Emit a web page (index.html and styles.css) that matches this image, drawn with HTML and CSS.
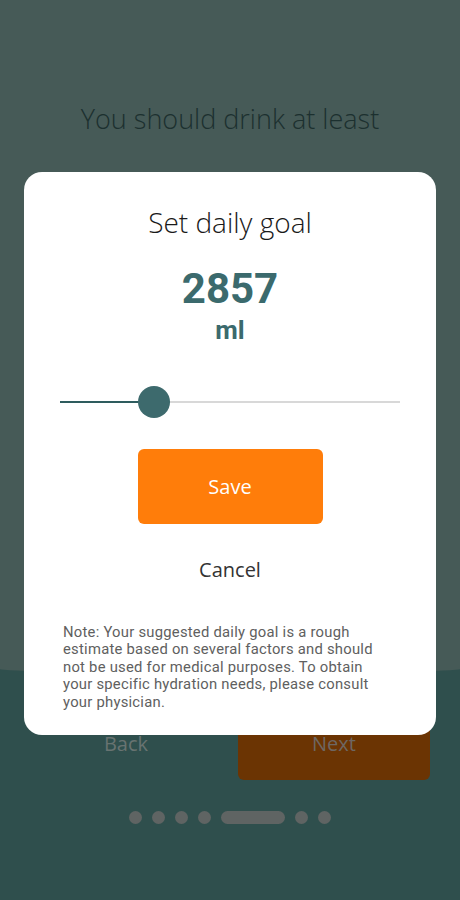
FILE: index.html
```html
<!DOCTYPE html>
<html lang="en">
<head>
<meta charset="utf-8">
<title>Set daily goal</title>
<link rel="stylesheet" href="styles.css">
</head>
<body>
<div class="screen">
  <div class="upper">
    <h1 class="headline">You should drink at least</h1>
  </div>
  <div class="lower">
    <div class="nav">
      <div class="nav-back">Back</div>
      <div class="nav-next">Next</div>
    </div>
    <div class="dots">
      <span class="dot"></span>
      <span class="dot"></span>
      <span class="dot"></span>
      <span class="dot"></span>
      <span class="dot dot-active"></span>
      <span class="dot"></span>
      <span class="dot"></span>
    </div>
  </div>

  <div class="dialog">
    <h2 class="dialog-title">Set daily goal</h2>
    <div class="amount">
      <div class="amount-value">2857</div>
      <div class="amount-unit">ml</div>
    </div>
    <div class="slider">
      <div class="slider-fill" style="width: 94px"></div>
      <div class="slider-thumb" style="left: 94px"></div>
    </div>
    <button class="btn-save">Save</button>
    <button class="btn-cancel">Cancel</button>
    <p class="note">Note: Your suggested daily goal is a rough<br>estimate based on several factors and should<br>not be used for medical purposes. To obtain<br>your specific hydration needs, please consult<br>your physician.</p>
  </div>
</div>
</body>
</html>
```

FILE: styles.css
```css
* { box-sizing: border-box; }
html, body {
  margin: 0;
  padding: 0;
  width: 460px;
  height: 900px;
  overflow: hidden;
  font-family: "Open Sans", "Noto Sans", sans-serif;
}
.screen {
  position: relative;
  width: 460px;
  height: 900px;
  display: flex;
  flex-direction: column;
  background: #2f4f4d;
}
.upper {
  height: 673px;
  background: #465a57;
  padding-top: 100px;
  border-bottom-left-radius: 50% 4px;
  border-bottom-right-radius: 50% 4px;
}
.headline {
  margin: 0;
  text-align: center;
  font-weight: 300;
  font-size: 27px;
  line-height: 38px;
  color: #1c302f;
}
.lower {
  flex: 1;
  display: flex;
  flex-direction: column;
  padding-top: 33px;
}
.nav {
  display: flex;
  align-items: center;
  height: 74px;
  padding: 0 30px 0 0;
}
.nav-back {
  flex: 0 0 238px;
  padding-left: 14px;
  text-align: center;
  font-size: 20px;
  color: #687371;
}
.nav-next {
  flex: 1;
  height: 74px;
  background: #6b3403;
  border-radius: 6px;
  display: flex;
  align-items: center;
  justify-content: center;
  font-size: 20px;
  color: #6e6762;
}
.dots {
  display: flex;
  justify-content: center;
  align-items: center;
  gap: 10px;
  margin-top: 31px;
}
.dot {
  width: 13px;
  height: 13px;
  border-radius: 50%;
  background: #5f6463;
}
.dot-active {
  width: 64px;
  border-radius: 7px;
}
.dialog {
  position: absolute;
  left: 24px;
  top: 172px;
  width: 412px;
  height: 563px;
  background: #ffffff;
  border-radius: 18px;
  display: flex;
  flex-direction: column;
  align-items: center;
  padding: 30px 30px 0 39px;
}
.dialog-title {
  margin: 0;
  font-weight: 300;
  font-size: 28px;
  line-height: 40px;
  color: #1a1a1a;
  margin-left: -9px;
}
.amount {
  margin-top: 24px;
  margin-left: -9px;
  text-align: center;
  color: #3b6a6d;
  font-family: Roboto, "Open Sans", sans-serif;
  font-weight: 700;
}
.amount-value {
  font-size: 42px;
  line-height: 46px;
}
.amount-unit {
  font-size: 26px;
  line-height: 36px;
}
.slider {
  position: relative;
  align-self: flex-start;
  margin: 53px 0 0 -3px;
  width: 340px;
  height: 2px;
  background: #d8d8d8;
}
.slider-fill {
  height: 2px;
  background: #2e5c5e;
}
.slider-thumb {
  position: absolute;
  top: -15px;
  width: 32px;
  height: 32px;
  margin-left: -16px;
  border-radius: 50%;
  background: #3d6a6d;
}
.btn-save {
  margin-top: 46px;
  margin-left: -9px;
  width: 185px;
  height: 75px;
  border: none;
  border-radius: 6px;
  background: #ff7d0a;
  color: #ffffff;
  font-family: inherit;
  font-size: 20px;
}
.btn-cancel {
  margin-top: 27px;
  margin-left: -9px;
  border: none;
  background: none;
  padding: 0;
  font-family: inherit;
  font-size: 20px;
  line-height: 38px;
  color: #333333;
}
.note {
  align-self: stretch;
  margin: 35px 0 0;
  font-family: Roboto, "Open Sans", sans-serif;
  font-size: 14.8px;
  line-height: 17.4px;
  letter-spacing: 0.25px;
  color: #606060;
  white-space: nowrap;
}
```
